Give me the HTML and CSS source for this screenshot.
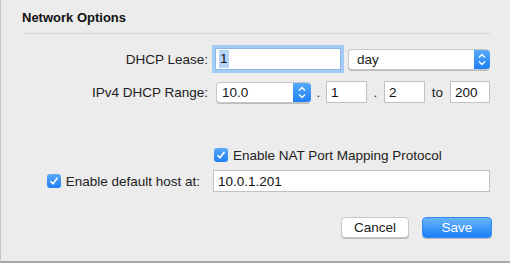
FILE: index.html
```html
<!DOCTYPE html>
<html lang="en">
	<head>
		<meta charset="UTF-8" />
		<meta name="viewport" content="width=device-width, initial-scale=1.0" />
		<title>Network Options</title>
		<link rel="stylesheet" href="styles.css">
	</head>
	<body>
		<div class="window">
			<h1 class="title">Network Options</h1>
			<div class="rule"></div>

			<div class="form">
				<div class="row row-lease">
					<label class="label">DHCP Lease:</label>
					<div class="controls">
						<div class="field field-lease focus"><span class="selected">1</span></div>
						<div class="popup">
							<span class="popup-text">day</span>
							<span class="stepper">
								<svg width="16" height="21" viewBox="0 0 16 21">
									<path d="M5 8.5 L8 5.5 L11 8.5 M5 12.5 L8 15.5 L11 12.5" fill="none" stroke="#fff" stroke-width="1.4" />
								</svg>
							</span>
						</div>
					</div>
				</div>

				<div class="row row-range">
					<label class="label">IPv4 DHCP Range:</label>
					<div class="controls">
						<div class="combo">
							<span class="combo-text">10.0</span>
							<span class="stepper">
								<svg width="18" height="21" viewBox="0 0 18 21">
									<path d="M6 8.5 L9 5.5 L12 8.5 M6 12.5 L9 15.5 L12 12.5" fill="none" stroke="#fff" stroke-width="1.4" />
								</svg>
							</span>
						</div>
						<span class="sep">.</span>
						<input class="field field-octet" type="text" value="1" />
						<span class="sep sep-wide">.</span>
						<input class="field field-octet" type="text" value="2" />
						<span class="sep sep-to">to</span>
						<input class="field field-end" type="text" value="200" />
					</div>
				</div>

				<div class="row row-nat">
					<span></span>
					<label class="check">
						<span class="box">
							<svg width="14" height="14" viewBox="0 0 14 14">
								<path d="M3.5 7.2 L6 9.8 L10.5 3.8" fill="none" stroke="#fff" stroke-width="1.6" />
							</svg>
						</span>
						Enable NAT Port Mapping Protocol
					</label>
				</div>

				<div class="row row-host">
					<label class="check check-right">
						<span class="box">
							<svg width="14" height="14" viewBox="0 0 14 14">
								<path d="M3.5 7.2 L6 9.8 L10.5 3.8" fill="none" stroke="#fff" stroke-width="1.6" />
							</svg>
						</span>
						Enable default host at:
					</label>
					<input class="field field-host" type="text" value="10.0.1.201" />
				</div>
			</div>

			<div class="buttons">
				<button type="button" class="btn">Cancel</button>
				<button type="button" class="btn btn-default">Save</button>
			</div>
		</div>
	</body>
</html>
```

FILE: styles.css
```css
body {
	background-color: #ececec;
	margin: 0;
	padding: 0;
	font-family: "Liberation Sans", Arial, sans-serif;
	font-size: 13.5px;
	color: #222;
}
.window {
	box-sizing: border-box;
	width: 510px;
	height: 263px;
	padding: 10px 20px 0 21px;
	border-left: 1px solid #c4c4c4;
	border-bottom: 2px solid #a9a9a9;
}
.title {
	margin: 0;
	font-size: 13px;
	line-height: 16px;
	font-weight: bold;
	color: #111;
}
.rule {
	height: 1px;
	margin: 7px 0 0 2px;
	background-color: #d6d6d6;
}
.form {
	display: flex;
	flex-direction: column;
	margin-top: 14px;
}
.row {
	display: grid;
	grid-template-columns: 185px 275px;
	column-gap: 7px;
	align-items: center;
	height: 22px;
	margin-left: 1px;
}
.row-range {
	margin-top: 11px;
}
.row-nat {
	margin-top: 41px;
}
.row-nat .check {
	margin-left: -1px;
}
.row-host {
	margin-top: 4px;
	column-gap: 5px;
}
.label {
	text-align: right;
}
.controls {
	display: flex;
	align-items: center;
}
.field {
	box-sizing: border-box;
	height: 22px;
	padding: 0 4px;
	border: 1px solid #c2c2c2;
	background: #fff;
	font-family: inherit;
	font-size: 13.5px;
	color: #111;
	outline: none;
}
.field-lease {
	display: flex;
	align-items: center;
	width: 126px;
	padding: 0 3px;
	border-color: #8fb8e8;
}
.selected {
	background-color: #b5d5fb;
	padding: 1px 1px 2px 1px;
}
.focus {
	box-shadow: 0 0 0 3px #a3ccf6;
}
.popup {
	display: flex;
	align-items: center;
	justify-content: space-between;
	box-sizing: border-box;
	width: 142px;
	height: 21px;
	margin-left: 7px;
	border: 1px solid #c8c8c8;
	border-right: none;
	border-radius: 4px;
	background: #fff;
	box-shadow: 0 1px 0 #bcbcbc;
	overflow: hidden;
}
.popup-text {
	padding-left: 8px;
}
.stepper {
	display: flex;
	height: 21px;
	background: linear-gradient(#5aacfb, #1b7ef6);
}
.combo {
	display: flex;
	align-items: center;
	justify-content: space-between;
	box-sizing: border-box;
	width: 95px;
	height: 21px;
	margin-left: 1px;
	border: 1px solid #c8c8c8;
	border-right: none;
	border-radius: 4px;
	background: #fff;
	box-shadow: 0 1px 0 #bcbcbc;
	overflow: hidden;
}
.combo-text {
	padding-left: 5px;
}
.sep {
	width: 15px;
	text-align: center;
}
.sep-wide {
	width: 17px;
}
.sep-to {
	width: 25px;
}
.field-octet {
	width: 41px;
}
.field-end {
	width: 40px;
}
.check {
	display: flex;
	align-items: center;
	gap: 5px;
}
.check-right {
	justify-content: flex-end;
	padding-right: 8px;
}
.box {
	display: flex;
	width: 14px;
	height: 14px;
	border-radius: 3px;
	background: linear-gradient(#5aa9fa, #1f80f5);
}
.field-host {
	width: 277px;
}
.buttons {
	display: flex;
	justify-content: flex-end;
	gap: 13px;
	margin-top: 25px;
	margin-right: -2px;
}
.btn {
	box-sizing: border-box;
	width: 68px;
	height: 21px;
	padding: 0;
	border: 1px solid #c6c6c6;
	border-radius: 4px;
	background: #fff;
	box-shadow: 0 1px 0 #b8b8b8;
	font-family: inherit;
	font-size: 13.5px;
	color: #222;
}
.btn-default {
	width: 70px;
	border-color: #2f8cf4;
	background: linear-gradient(#6ab4fb, #1a7ff6);
	color: #fff;
}
```
